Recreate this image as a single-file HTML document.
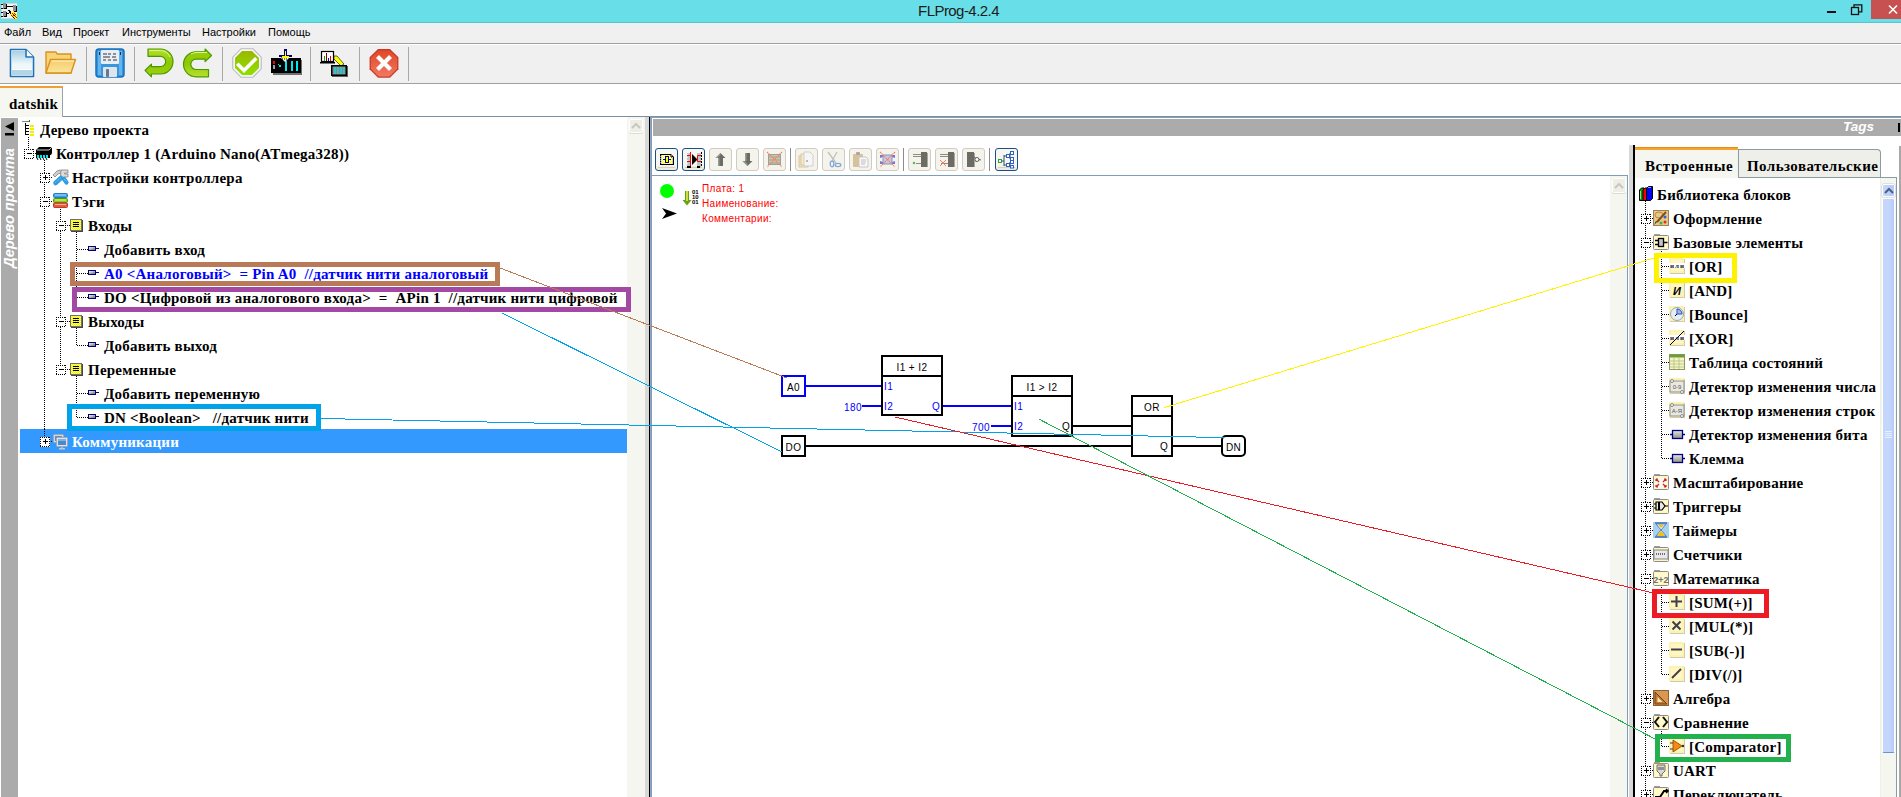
<!DOCTYPE html>
<html><head><meta charset="utf-8"><style>
*{margin:0;padding:0;box-sizing:border-box}
html,body{width:1901px;height:797px;overflow:hidden;background:#fff;position:relative;font-family:"Liberation Sans",sans-serif}
.a{position:absolute}
.mi{position:absolute;top:26px;font-size:11px;color:#000;line-height:13px}
.s{position:absolute;font-family:"Liberation Serif",serif;font-weight:bold;font-size:15px;letter-spacing:0.22px;line-height:24px;white-space:pre;color:#000}
.vd{position:absolute;width:1px;background-image:linear-gradient(#000 50%,transparent 50%);background-size:1px 2px}
.hd{position:absolute;height:1px;background-image:linear-gradient(90deg,#000 50%,transparent 50%);background-size:2px 1px}
.eb{position:absolute;width:9px;height:9px;background:#fff}
.eb i{position:absolute;background:#000}
.blk{position:absolute;border:2px solid #000;background:#fff}
.dg{position:absolute;font-size:10px;line-height:12px;white-space:pre;letter-spacing:0.4px}
svg{position:absolute;overflow:visible}
</style></head><body>
<div class="a" style="left:0;top:0;width:1901px;height:22px;background:#68dfe8"></div>
<div class="a" style="left:0;top:22px;width:1901px;height:1px;background:#55c6ce"></div>
<div class="a" style="left:0;top:2px;width:1901px;text-align:center;font-size:15px;letter-spacing:-0.55px;color:#1e1a1a;padding-left:16px;line-height:18px">FLProg-4.2.4</div>
<svg style="left:1px;top:3px" width="16" height="16" viewBox="0 0 16 16" shape-rendering="crispEdges">
<rect x="0" y="0" width="16" height="16" fill="#d8d4d4"/><rect x="1" y="1" width="15" height="14" fill="#f4f4f4"/>
<rect x="0" y="1" width="2" height="1" fill="#000"/><rect x="0" y="5" width="2" height="1" fill="#000"/><rect x="0" y="9" width="2" height="1" fill="#000"/><rect x="0" y="13" width="2" height="1" fill="#000"/>
<rect x="2" y="0" width="3" height="6" fill="#909090"/><rect x="5" y="1" width="1" height="5" fill="#000"/><rect x="3" y="5" width="3" height="1" fill="#000"/>
<rect x="2" y="8" width="3" height="6" fill="#909090"/><rect x="5" y="9" width="1" height="5" fill="#000"/><rect x="3" y="13" width="3" height="1" fill="#000"/>
<rect x="6" y="3" width="7" height="1" fill="#000"/><rect x="6" y="10" width="2" height="1" fill="#000"/>
<rect x="12" y="2" width="3" height="7" fill="#909090"/><rect x="15" y="3" width="1" height="6" fill="#000"/><rect x="13" y="8" width="3" height="1" fill="#000"/>
<rect x="7" y="7" width="2" height="1" fill="#000"/><rect x="8" y="8" width="2" height="2" fill="#000"/><rect x="9" y="10" width="1" height="1" fill="#000"/>
<path d="M9 11 L12 8 L16 12 L16 16 L13 16 Z" fill="#ff0"/>
<rect x="11" y="10" width="1" height="1" fill="#e00"/><rect x="12" y="11" width="1" height="1" fill="#e00"/><rect x="13" y="12" width="1" height="1" fill="#000"/><rect x="10" y="12" width="1" height="1" fill="#e00"/><rect x="11" y="13" width="1" height="1" fill="#e00"/><rect x="12" y="14" width="1" height="1" fill="#000"/><rect x="13" y="10" width="1" height="1" fill="#e00"/><rect x="14" y="11" width="1" height="1" fill="#e00"/><rect x="14" y="13" width="1" height="1" fill="#e00"/><rect x="15" y="14" width="1" height="1" fill="#e00"/><rect x="13" y="15" width="1" height="1" fill="#e00"/><rect x="12" y="12" width="1" height="1" fill="#e00"/>
</svg>
<div class="a" style="left:1827px;top:11px;width:9px;height:2px;background:#111"></div>
<svg style="left:1851px;top:4px" width="12" height="11" viewBox="0 0 12 11"><rect x="0.5" y="3.5" width="7" height="7" fill="none" stroke="#111" stroke-width="1.3"/><path d="M3 3.5 V0.8 H10.8 V7.8 H8" fill="none" stroke="#111" stroke-width="1.3"/></svg>
<div class="a" style="left:1871px;top:0;width:30px;height:19px;background:#c75050"></div>
<svg style="left:1888px;top:5px" width="10" height="9" viewBox="0 0 10 9"><path d="M1 0.5 L9 8.5 M9 0.5 L1 8.5" stroke="#fff" stroke-width="1.6"/></svg>
<div class="a" style="left:0;top:23px;width:1901px;height:20px;background:#f0f0f0"></div>
<div class="mi" style="left:4px">Файл</div>
<div class="mi" style="left:42px">Вид</div>
<div class="mi" style="left:73px">Проект</div>
<div class="mi" style="left:122px">Инструменты</div>
<div class="mi" style="left:202px">Настройки</div>
<div class="mi" style="left:268px">Помощь</div>
<div class="a" style="left:0;top:43px;width:1901px;height:1px;background:#a0a0a0"></div>
<div class="a" style="left:0;top:44px;width:1901px;height:1px;background:#fff"></div>
<div class="a" style="left:0;top:45px;width:1901px;height:38px;background:#f0f0f0"></div>
<div class="a" style="left:0;top:83px;width:1901px;height:1px;background:#a0a0a0"></div>
<div class="a" style="left:86px;top:47px;width:1px;height:34px;background:#a8a8a8"></div>
<div class="a" style="left:134px;top:47px;width:1px;height:34px;background:#a8a8a8"></div>
<div class="a" style="left:222px;top:47px;width:1px;height:34px;background:#a8a8a8"></div>
<div class="a" style="left:310px;top:47px;width:1px;height:34px;background:#a8a8a8"></div>
<div class="a" style="left:359px;top:47px;width:1px;height:34px;background:#a8a8a8"></div>
<div class="a" style="left:408px;top:47px;width:1px;height:34px;background:#a8a8a8"></div>
<div class="a" style="left:0;top:86px;width:63px;height:31px;background:#f7f7f2;border-top:2px solid #f0a030;border-right:1px solid #98a4ae"></div>
<div class="s" style="left:9px;top:92px">datshik</div>
<div class="a" style="left:63px;top:116px;width:1838px;height:1px;background:#7a8fa0"></div>
<div class="a" style="left:1px;top:118px;width:17px;height:679px;background:#ababab"></div>
<svg style="left:5px;top:122px" width="10" height="14" viewBox="0 0 10 14"><path d="M9 0 V9 L0 4.5 Z" fill="#000"/><rect x="0" y="11" width="9" height="2.5" fill="#000"/></svg>
<div class="a" style="left:-51px;top:200px;width:120px;height:16px;transform:rotate(-90deg);font-weight:bold;font-style:italic;font-size:14.5px;line-height:16px;color:#fff;text-align:center;white-space:pre">Дерево проекта</div>
<div class="a" style="left:627px;top:117px;width:18px;height:680px;background:#f6f6f1"></div>
<div class="a" style="left:629px;top:119px;width:14px;height:14px;background:#eeede6;border:1px solid #fff;border-radius:2px;box-shadow:0 1px 0 #dcdccc"></div>
<svg style="left:631px;top:122px" width="10" height="7" viewBox="0 0 10 7"><path d="M1 6 L5 2 L9 6" fill="none" stroke="#c8c8c0" stroke-width="2"/></svg>
<div class="a" style="left:645px;top:117px;width:4px;height:680px;background:#d8d8d8"></div>
<div class="a" style="left:649px;top:117px;width:1px;height:680px;background:#000"></div>
<svg style="left:9px;top:48px" width="26" height="30" viewBox="0 0 26 30">
<defs><linearGradient id="ndg" x1="0" y1="0" x2="0" y2="1"><stop offset="0" stop-color="#a8d0e2"/><stop offset="0.75" stop-color="#eef8fb"/></linearGradient></defs>
<path d="M1.5 1.5 H17 L24.5 9 V28.5 H1.5Z" fill="#fff" stroke="#1a72b8" stroke-width="1.6" stroke-linejoin="round"/>
<path d="M3 3 H16 V10 H23 V21 H3Z" fill="url(#ndg)"/><rect x="3" y="22" width="20" height="5" fill="#b2d6e6"/>
<path d="M17 1.5 V9 H24.5" fill="#fff" stroke="#1a72b8" stroke-width="1.6" stroke-linejoin="round"/>
</svg>
<svg style="left:45px;top:51px" width="32" height="25" viewBox="0 0 32 25">
<defs><linearGradient id="fdg" x1="0" y1="0" x2="0" y2="1"><stop offset="0" stop-color="#f4cc6a"/><stop offset="1" stop-color="#fce49a"/></linearGradient></defs>
<path d="M1 1 H11 L12 3 H26 V22 H1Z" fill="#f8d478" stroke="#d8921e" stroke-width="1.4" stroke-linejoin="round"/>
<path d="M1 22 L5.5 8.5 H30.5 L26 22Z" fill="url(#fdg)" stroke="#d8921e" stroke-width="1.4" stroke-linejoin="round"/>
<path d="M6.5 10 H29" stroke="#fff4c8" stroke-width="1"/>
</svg>
<svg style="left:95px;top:48px" width="30" height="30" viewBox="0 0 30 30">
<rect x="1" y="1" width="28" height="28" rx="3" fill="#3a96dc" stroke="#1670c0" stroke-width="1.5"/>
<rect x="3" y="3" width="3" height="24" fill="#66b4ec"/><rect x="24" y="3" width="3" height="24" fill="#66b4ec"/>
<rect x="6" y="2" width="18" height="14" rx="1" fill="#e8eef4"/>
<path d="M8 6 h4 M13 6 h3 M18 6 h3 M8 9 h7 M17 9 h4 M8 12 h3 M13 12 h3 M18 12 h4" stroke="#2a3440" stroke-width="1.2"/>
<rect x="8" y="19" width="14" height="10" rx="1" fill="#dce4ee"/><rect x="11" y="21" width="3" height="8" rx="1" fill="#6a7888"/>
<rect x="4" y="4" width="1" height="3" fill="#1a3050"/><rect x="25" y="4" width="1" height="3" fill="#1a3050"/>
</svg>
<svg style="left:144px;top:48px" width="30" height="30" viewBox="0 0 30 30"><defs><linearGradient id="urg" x1="0" y1="0" x2="0" y2="1"><stop offset="0" stop-color="#b8e030"/><stop offset="0.5" stop-color="#8cc800"/><stop offset="1" stop-color="#a0d010"/></linearGradient></defs><path d="M4 1 H16.5 A12.5 12.5 0 0 1 16.5 26 H7.4 V28.8 L1 22.35 L7.4 16.2 V18.7 H16.5 A5.2 5.2 0 0 0 16.5 8.3 H4 Z" fill="url(#urg)" stroke="#4a9800" stroke-width="1.2" stroke-linejoin="round"/><path d="M5 2.5 H16.5 A11 11 0 0 1 26 9" fill="none" stroke="#d8f880" stroke-width="1"/></svg>
<svg style="left:183px;top:48px" width="30" height="30" viewBox="0 0 30 30"><defs><linearGradient id="urg" x1="0" y1="0" x2="0" y2="1"><stop offset="0" stop-color="#b8e030"/><stop offset="0.5" stop-color="#8cc800"/><stop offset="1" stop-color="#a0d010"/></linearGradient></defs><g transform="rotate(180 14.75 14.9)"><path d="M4 1 H16.5 A12.5 12.5 0 0 1 16.5 26 H7.4 V28.8 L1 22.35 L7.4 16.2 V18.7 H16.5 A5.2 5.2 0 0 0 16.5 8.3 H4 Z" fill="url(#urg)" stroke="#4a9800" stroke-width="1.2" stroke-linejoin="round"/></g><path d="M8 6 A10 10 0 0 1 13 4.5 H24" fill="none" stroke="#d8f880" stroke-width="1"/></svg>
<svg style="left:231px;top:47px" width="32" height="32" viewBox="0 0 32 32">
<defs><linearGradient id="ckg" x1="0" y1="0" x2="0" y2="1"><stop offset="0" stop-color="#9ab800"/><stop offset="1" stop-color="#8ee000"/></linearGradient></defs>
<polygon points="30.78,22.12 22.12,30.78 9.88,30.78 1.22,22.12 1.22,9.88 9.88,1.22 22.12,1.22 30.78,9.88" fill="#b8b8c0"/><polygon points="29.67,21.66 21.66,29.67 10.34,29.67 2.33,21.66 2.33,10.34 10.34,2.33 21.66,2.33 29.67,10.34" fill="#f8f8fc"/><polygon points="28.01,20.97 20.97,28.01 11.03,28.01 3.99,20.97 3.99,11.03 11.03,3.99 20.97,3.99 28.01,11.03" fill="url(#ckg)"/>
<path d="M7.5 18 L13 23.5 L24 12.5" fill="none" stroke="#fff" stroke-width="3.6" stroke-linecap="square"/>
</svg>
<svg style="left:271px;top:49px" width="31" height="27" viewBox="0 0 31 27">
<rect x="2" y="11" width="29" height="15" fill="#707070"/>
<rect x="0" y="9" width="30" height="15" fill="#000"/>
<rect x="2" y="12" width="2" height="3" fill="#e00"/><rect x="2" y="16" width="2" height="4" fill="#a0a0a0"/>
<rect x="7" y="15" width="1" height="1" fill="#00e8f0"/><rect x="8" y="16" width="2" height="2" fill="#00e8f0"/>
<rect x="14" y="12" width="2" height="10" fill="#00e8f0"/><rect x="20" y="12" width="2" height="10" fill="#00e8f0"/><rect x="25" y="12" width="2" height="10" fill="#00e8f0"/>
<path d="M9 8 L14 13 L19 8 L14 3Z" fill="#fff"/><path d="M10 8 h1 M12 8 h1 M14 8 h1 M16 8 h1 M11 10 h1 M13 10 h1 M15 10 h1" stroke="#000" stroke-width="1"/>
<rect x="13" y="0" width="3" height="9" fill="#000080"/><rect x="8" y="6" width="13" height="2" fill="#000080"/><rect x="14" y="2" width="1" height="9" fill="#ff0"/><rect x="11" y="7" width="7" height="2" fill="#ff0"/>
</svg>
<svg style="left:320px;top:50px" width="29" height="28" viewBox="0 0 29 28">
<rect x="1.5" y="1.5" width="12" height="10" fill="#fff" stroke="#000" stroke-width="1.2"/><rect x="0" y="12" width="15" height="1.5" fill="#000"/>
<rect x="4" y="6" width="1" height="5" fill="#0a0"/><rect x="6" y="3" width="1" height="8" fill="#800"/><rect x="8" y="8" width="1" height="3" fill="#00f"/><rect x="10" y="6" width="1" height="5" fill="#e00"/>
<path d="M14 6 L17 6 L24 14 L21 16 L14 9Z" fill="#ffff00" stroke="#000" stroke-width="0.6"/>
<rect x="12" y="16" width="16" height="11" fill="#606060"/><rect x="11" y="15" width="16" height="11" fill="#000"/><rect x="12.5" y="16.5" width="13" height="8" fill="#888"/>
<path d="M15 17 V24 M18 17 V24 M21 17 V24 M24 17 V24" stroke="#00e8f0" stroke-width="1.2"/>
</svg>
<svg style="left:368px;top:47px" width="32" height="32" viewBox="0 0 32 32">
<defs><linearGradient id="xg" x1="0" y1="0" x2="0" y2="1"><stop offset="0" stop-color="#e04828"/><stop offset="1" stop-color="#f07860"/></linearGradient></defs>
<polygon points="30.41,22.27 21.97,30.71 10.03,30.71 1.59,22.27 1.59,10.33 10.03,1.89 21.97,1.89 30.41,10.33" fill="#c83a28"/><polygon points="29.12,21.73 21.43,29.42 10.57,29.42 2.88,21.73 2.88,10.87 10.57,3.18 21.43,3.18 29.12,10.87" fill="url(#xg)"/>
<path d="M9.5 9.5 L22.5 22.5 M22.5 9.5 L9.5 22.5" stroke="#fff" stroke-width="4.2"/>
</svg>
<div class="vd" style="left:28px;top:137px;height:12px"></div>
<div class="vd" style="left:44px;top:160px;height:278px"></div>
<div class="vd" style="left:60px;top:209px;height:161px"></div>
<div class="vd" style="left:76px;top:232px;height:66px"></div>
<div class="vd" style="left:76px;top:328px;height:18px"></div>
<div class="vd" style="left:76px;top:376px;height:42px"></div>
<svg style="left:22px;top:120px" width="14" height="17" viewBox="0 0 14 17">
<rect x="0" y="1" width="5" height="1" fill="#888"/><rect x="5" y="1" width="2" height="1" fill="#0c0"/><rect x="7" y="0" width="1" height="2" fill="#555"/>
<rect x="3" y="3" width="1" height="12" fill="#000"/>
<rect x="3" y="5" width="4" height="1" fill="#000"/><rect x="3" y="8" width="4" height="1" fill="#000"/><rect x="3" y="11" width="4" height="1" fill="#000"/><rect x="3" y="14" width="4" height="1" fill="#000"/>
<rect x="8" y="5" width="4" height="2" fill="#f0f000"/><rect x="8" y="8" width="4" height="2" fill="#f0f000"/><rect x="8" y="11" width="4" height="2" fill="#f0f000"/><rect x="8" y="14" width="4" height="2" fill="#f0f000"/>
</svg>
<div class="s" style="left:40px;top:118px;color:#000;">Дерево проекта</div>
<svg style="left:24px;top:149px" width="10" height="10" viewBox="0 0 10 10"><rect x="0" y="0" width="10" height="10" fill="#fff"/><path d="M0.5 0 V10 M9.5 0 V10 M0 0.5 H10 M0 9.5 H10" stroke="#000" stroke-width="1" stroke-dasharray="1 1"/><rect x="3" y="4" width="5" height="1" fill="#000"/></svg>
<div class="hd" style="left:33px;top:153px;width:3px"></div>
<svg style="left:36px;top:147px" width="17" height="14" viewBox="0 0 17 14">
<path d="M3 0 H16 V6 L15 8 H0 V3 Z" fill="#000"/><path d="M1 3 H13 L16 0" stroke="#fff" stroke-width="0.8" fill="none"/>
<rect x="0" y="8" width="14" height="3" fill="#000"/>
<rect x="1" y="8" width="2" height="3" fill="#00e8f0"/><rect x="4" y="8" width="2" height="3" fill="#00e8f0"/><rect x="7" y="8" width="2" height="3" fill="#00e8f0"/><rect x="10" y="8" width="2" height="3" fill="#00e8f0"/>
<path d="M1 11 L2 13 M4 11 L5 13 M7 11 L8 13 M10 11 L11 13" stroke="#000" stroke-width="1"/>
</svg>
<div class="s" style="left:56px;top:142px;color:#000;">Контроллер 1 (Arduino Nano(ATmega328))</div>
<svg style="left:40px;top:173px" width="10" height="10" viewBox="0 0 10 10"><rect x="0" y="0" width="10" height="10" fill="#fff"/><path d="M0.5 0 V10 M9.5 0 V10 M0 0.5 H10 M0 9.5 H10" stroke="#000" stroke-width="1" stroke-dasharray="1 1"/><rect x="3" y="4" width="5" height="1" fill="#000"/><rect x="5" y="2" width="1" height="5" fill="#000"/></svg>
<div class="hd" style="left:49px;top:177px;width:3px"></div>
<svg style="left:52px;top:168px" width="17" height="17" viewBox="0 0 17 17">
<path d="M1 7 L5 3 L8 2 L10 3 L9 5 L6 6 L3 9 Z" fill="#d0d0d0" stroke="#8c8c8c" stroke-width="0.9"/>
<path d="M9 2 H16 V5 H12.5 V6 H16 V9 H11.5 L10.5 10.5 L8.5 9 Z" fill="#dcdcdc" stroke="#8c8c8c" stroke-width="0.9"/>
<path d="M9 10 L3.5 15" stroke="#2e9ce0" stroke-width="4.6" stroke-linecap="round"/><path d="M8.5 10 L3.5 14.5" stroke="#b8e4ff" stroke-width="0.8" stroke-dasharray="1 1"/>
<path d="M12 11 L14.5 14.5" stroke="#2e9ce0" stroke-width="4.2" stroke-linecap="round"/><path d="M12 11 L15 14" stroke="#b8e4ff" stroke-width="0.8" stroke-dasharray="1 1"/>
</svg>
<div class="s" style="left:72px;top:166px;color:#000;">Настройки контроллера</div>
<svg style="left:40px;top:197px" width="10" height="10" viewBox="0 0 10 10"><rect x="0" y="0" width="10" height="10" fill="#fff"/><path d="M0.5 0 V10 M9.5 0 V10 M0 0.5 H10 M0 9.5 H10" stroke="#000" stroke-width="1" stroke-dasharray="1 1"/><rect x="3" y="4" width="5" height="1" fill="#000"/></svg>
<div class="hd" style="left:49px;top:201px;width:3px"></div>
<svg style="left:53px;top:193px" width="15" height="15" viewBox="0 0 15 15">
<rect x="0.5" y="0.5" width="14" height="4" rx="1" fill="#3aa0e8" stroke="#2a78c0"/><rect x="2" y="1.5" width="11" height="1" fill="#a8dcff"/>
<rect x="0.5" y="5.5" width="14" height="4" rx="1" fill="#8cc820" stroke="#4a9a10"/><rect x="2" y="6.5" width="11" height="1" fill="#e0ff80"/>
<rect x="0.5" y="10" width="14" height="4.5" rx="1" fill="#e85a40" stroke="#c03a28"/><rect x="2" y="11" width="11" height="1" fill="#ffb090"/>
</svg>
<div class="s" style="left:72px;top:190px;color:#000;">Тэги</div>
<svg style="left:56px;top:221px" width="10" height="10" viewBox="0 0 10 10"><rect x="0" y="0" width="10" height="10" fill="#fff"/><path d="M0.5 0 V10 M9.5 0 V10 M0 0.5 H10 M0 9.5 H10" stroke="#000" stroke-width="1" stroke-dasharray="1 1"/><rect x="3" y="4" width="5" height="1" fill="#000"/></svg>
<div class="hd" style="left:65px;top:225px;width:5px"></div>
<svg style="left:70px;top:219px" width="13" height="13" viewBox="0 0 13 13"><defs><pattern id="chk" width="2" height="2" patternUnits="userSpaceOnUse"><rect width="2" height="2" fill="#f0f000"/><rect width="1" height="1" fill="#ffff80"/><rect x="1" y="1" width="1" height="1" fill="#ffff80"/></pattern></defs><rect x="1" y="1" width="12" height="12" fill="#444"/><rect x="0.5" y="0.5" width="11" height="11" fill="url(#chk)" stroke="#707070"/><rect x="3" y="3" width="6" height="1" fill="#000"/><rect x="3" y="5" width="6" height="1" fill="#000"/><rect x="3" y="7" width="6" height="1" fill="#000"/></svg>
<div class="s" style="left:88px;top:214px;color:#000;">Входы</div>
<div class="hd" style="left:77px;top:249px;width:11px"></div>
<svg style="left:88px;top:246px" width="11" height="5" viewBox="0 0 11 5"><defs><linearGradient id="pg" x1="0" y1="0" x2="1" y2="1"><stop offset="0" stop-color="#f8f8f4"/><stop offset="1" stop-color="#70705c"/></linearGradient></defs><rect x="0" y="0" width="8" height="5" fill="#000080"/><rect x="1" y="1" width="6" height="3" fill="url(#pg)"/><rect x="8" y="2" width="3" height="1" fill="#000080"/></svg>
<div class="s" style="left:104px;top:238px;color:#000;">Добавить вход</div>
<div class="hd" style="left:77px;top:273px;width:11px"></div>
<svg style="left:88px;top:270px" width="11" height="5" viewBox="0 0 11 5"><defs><linearGradient id="pg" x1="0" y1="0" x2="1" y2="1"><stop offset="0" stop-color="#f8f8f4"/><stop offset="1" stop-color="#70705c"/></linearGradient></defs><rect x="0" y="0" width="8" height="5" fill="#000080"/><rect x="1" y="1" width="6" height="3" fill="url(#pg)"/><rect x="8" y="2" width="3" height="1" fill="#000080"/></svg>
<div class="s" style="left:104px;top:262px;color:#0000ff;">A0 &lt;Аналоговый&gt;  = Pin A0  //датчик нити аналоговый</div>
<div class="hd" style="left:77px;top:297px;width:11px"></div>
<svg style="left:88px;top:294px" width="11" height="5" viewBox="0 0 11 5"><defs><linearGradient id="pg" x1="0" y1="0" x2="1" y2="1"><stop offset="0" stop-color="#f8f8f4"/><stop offset="1" stop-color="#70705c"/></linearGradient></defs><rect x="0" y="0" width="8" height="5" fill="#000080"/><rect x="1" y="1" width="6" height="3" fill="url(#pg)"/><rect x="8" y="2" width="3" height="1" fill="#000080"/></svg>
<div class="s" style="left:104px;top:286px;color:#000;">DO &lt;Цифровой из аналогового входа&gt;  =  APin 1  //датчик нити цифровой</div>
<svg style="left:56px;top:317px" width="10" height="10" viewBox="0 0 10 10"><rect x="0" y="0" width="10" height="10" fill="#fff"/><path d="M0.5 0 V10 M9.5 0 V10 M0 0.5 H10 M0 9.5 H10" stroke="#000" stroke-width="1" stroke-dasharray="1 1"/><rect x="3" y="4" width="5" height="1" fill="#000"/></svg>
<div class="hd" style="left:65px;top:321px;width:5px"></div>
<svg style="left:70px;top:315px" width="13" height="13" viewBox="0 0 13 13"><defs><pattern id="chk" width="2" height="2" patternUnits="userSpaceOnUse"><rect width="2" height="2" fill="#f0f000"/><rect width="1" height="1" fill="#ffff80"/><rect x="1" y="1" width="1" height="1" fill="#ffff80"/></pattern></defs><rect x="1" y="1" width="12" height="12" fill="#444"/><rect x="0.5" y="0.5" width="11" height="11" fill="url(#chk)" stroke="#707070"/><rect x="3" y="3" width="6" height="1" fill="#000"/><rect x="3" y="5" width="6" height="1" fill="#000"/><rect x="3" y="7" width="6" height="1" fill="#000"/></svg>
<div class="s" style="left:88px;top:310px;color:#000;">Выходы</div>
<div class="hd" style="left:77px;top:345px;width:11px"></div>
<svg style="left:88px;top:342px" width="11" height="5" viewBox="0 0 11 5"><defs><linearGradient id="pg" x1="0" y1="0" x2="1" y2="1"><stop offset="0" stop-color="#f8f8f4"/><stop offset="1" stop-color="#70705c"/></linearGradient></defs><rect x="0" y="0" width="8" height="5" fill="#000080"/><rect x="1" y="1" width="6" height="3" fill="url(#pg)"/><rect x="8" y="2" width="3" height="1" fill="#000080"/></svg>
<div class="s" style="left:104px;top:334px;color:#000;">Добавить выход</div>
<svg style="left:56px;top:365px" width="10" height="10" viewBox="0 0 10 10"><rect x="0" y="0" width="10" height="10" fill="#fff"/><path d="M0.5 0 V10 M9.5 0 V10 M0 0.5 H10 M0 9.5 H10" stroke="#000" stroke-width="1" stroke-dasharray="1 1"/><rect x="3" y="4" width="5" height="1" fill="#000"/></svg>
<div class="hd" style="left:65px;top:369px;width:5px"></div>
<svg style="left:70px;top:363px" width="13" height="13" viewBox="0 0 13 13"><defs><pattern id="chk" width="2" height="2" patternUnits="userSpaceOnUse"><rect width="2" height="2" fill="#f0f000"/><rect width="1" height="1" fill="#ffff80"/><rect x="1" y="1" width="1" height="1" fill="#ffff80"/></pattern></defs><rect x="1" y="1" width="12" height="12" fill="#444"/><rect x="0.5" y="0.5" width="11" height="11" fill="url(#chk)" stroke="#707070"/><rect x="3" y="3" width="6" height="1" fill="#000"/><rect x="3" y="5" width="6" height="1" fill="#000"/><rect x="3" y="7" width="6" height="1" fill="#000"/></svg>
<div class="s" style="left:88px;top:358px;color:#000;">Переменные</div>
<div class="hd" style="left:77px;top:393px;width:11px"></div>
<svg style="left:88px;top:390px" width="11" height="5" viewBox="0 0 11 5"><defs><linearGradient id="pg" x1="0" y1="0" x2="1" y2="1"><stop offset="0" stop-color="#f8f8f4"/><stop offset="1" stop-color="#70705c"/></linearGradient></defs><rect x="0" y="0" width="8" height="5" fill="#000080"/><rect x="1" y="1" width="6" height="3" fill="url(#pg)"/><rect x="8" y="2" width="3" height="1" fill="#000080"/></svg>
<div class="s" style="left:104px;top:382px;color:#000;">Добавить переменную</div>
<div class="hd" style="left:77px;top:417px;width:11px"></div>
<svg style="left:88px;top:414px" width="11" height="5" viewBox="0 0 11 5"><defs><linearGradient id="pg" x1="0" y1="0" x2="1" y2="1"><stop offset="0" stop-color="#f8f8f4"/><stop offset="1" stop-color="#70705c"/></linearGradient></defs><rect x="0" y="0" width="8" height="5" fill="#000080"/><rect x="1" y="1" width="6" height="3" fill="url(#pg)"/><rect x="8" y="2" width="3" height="1" fill="#000080"/></svg>
<div class="s" style="left:104px;top:406px;color:#000;">DN &lt;Boolean&gt;   //датчик нити</div>
<div class="a" style="left:20px;top:429px;width:607px;height:24px;background:#3399ff"></div>
<div class="vd" style="left:44px;top:429px;height:8px"></div>
<svg style="left:40px;top:437px" width="10" height="10" viewBox="0 0 10 10"><rect x="0" y="0" width="10" height="10" fill="#fff"/><path d="M0.5 0 V10 M9.5 0 V10 M0 0.5 H10 M0 9.5 H10" stroke="#000" stroke-width="1" stroke-dasharray="1 1"/><rect x="3" y="4" width="5" height="1" fill="#000"/><rect x="5" y="2" width="1" height="5" fill="#000"/></svg>
<div class="hd" style="left:49px;top:441px;width:3px"></div>
<svg style="left:52px;top:433px" width="17" height="17" viewBox="0 0 17 17">
<rect x="1.5" y="1.5" width="10" height="8" rx="1" fill="#d0d8e0" stroke="#a0a8b0"/><rect x="3" y="3" width="7" height="5" fill="#5a90c8"/>
<rect x="4.5" y="4.5" width="11" height="9" rx="1" fill="#e0e4e8" stroke="#a0a8b0"/><rect x="6" y="6" width="8" height="6" fill="#4a88d0"/><rect x="6" y="6" width="8" height="2" fill="#80b0e0"/>
<rect x="9" y="13.5" width="2" height="2" fill="#b0b0b0"/><rect x="7" y="15" width="6" height="1.5" fill="#c8c8c8"/>
</svg>
<div class="s" style="left:72px;top:430px;color:#fff;">Коммуникации</div>
<div class="a" style="left:650px;top:117px;width:1px;height:680px;background:#8fa8c0"></div>
<div class="a" style="left:651px;top:117px;width:1px;height:680px;background:#7f9db9"></div>
<div class="a" style="left:651px;top:117px;width:1250px;height:1px;background:#8aa0b4"></div>
<div class="a" style="left:653px;top:119px;width:1248px;height:17px;background:#ababab"></div>
<div class="a" style="left:1843px;top:118px;font-weight:bold;font-style:italic;font-size:13.5px;line-height:18px;color:#fff">Tags</div>
<div class="a" style="left:1898px;top:123px;width:2px;height:9px;background:#000"></div>
<div class="a" style="left:655px;top:148px;width:23px;height:23px;border-radius:3px;border:1.5px solid #1a4f8a;background:linear-gradient(#f7f7f2 70%,#ede9dd);"></div>
<div class="a" style="left:658px;top:167px;width:17px;height:1px;background:#d8cfbf"></div>
<svg style="left:658px;top:151px" width="17" height="17" viewBox="0 0 17 17"><defs><pattern id="yck" width="2" height="2" patternUnits="userSpaceOnUse"><rect width="2" height="2" fill="#ffff00"/><rect width="1" height="1" fill="#fff"/><rect x="1" y="1" width="1" height="1" fill="#fff"/></pattern></defs><path d="M2 3 H13 L16 6 V14 H2Z" fill="#000"/><rect x="3" y="4" width="1" height="9" fill="#c8c8c8"/><path d="M3 5 v1 M3 7 v1 M3 9 v1 M3 11 v1" stroke="#fff"/><rect x="4" y="4" width="10" height="9" fill="url(#yck)"/><path d="M13 4 V6 H15" fill="none" stroke="#000"/><rect x="14" y="6" width="1" height="7" fill="#c8c8c8"/><rect x="5" y="8" width="8" height="1" fill="#0000a0"/><rect x="7.5" y="5.5" width="3" height="6" fill="#ffff00" stroke="#0000a0"/></svg>
<div class="a" style="left:682px;top:148px;width:23px;height:23px;border-radius:3px;border:1.5px solid #1a4f8a;background:linear-gradient(#f7f7f2 70%,#ede9dd);"></div>
<div class="a" style="left:685px;top:167px;width:17px;height:1px;background:#d8cfbf"></div>
<svg style="left:685px;top:151px" width="17" height="17" viewBox="0 0 17 17"><rect x="2" y="2" width="3" height="14" fill="#b8c8c8"/><path d="M2.5 3 v1 M2.5 6 v1 M2.5 9 v1 M2.5 12 v1" stroke="#e8f0f0"/><rect x="5" y="1" width="1" height="15" fill="#f00"/><rect x="2" y="4" width="3" height="1" fill="#f00"/><rect x="2" y="10" width="3" height="1" fill="#f00"/><rect x="2" y="15" width="4" height="2" fill="#000"/><path d="M7 3 L12.5 8.5 L7 14Z" fill="#000"/><rect x="12" y="2" width="4" height="14" fill="#b8c8c8"/><path d="M12.5 4.5 H16 M12.5 4.5 V10.5 H16" fill="none" stroke="#f00"/><path d="M16.5 1 v2 M16.5 4 v2 M16.5 7 v2 M16.5 10 v2 M16.5 13 v2" stroke="#000"/><rect x="12" y="15" width="3" height="2" fill="#000"/></svg>
<div class="a" style="left:709px;top:148px;width:23px;height:23px;border-radius:3px;border:1px solid #cfcdbf;background:#f4f3ec;"></div>
<svg style="left:712px;top:151px" width="17" height="17" viewBox="0 0 17 17"><path d="M8.5 2 L13.5 7 H11 V15 H6 V7 H3.5Z" fill="#6c6c64"/><path d="M8.5 2 L3.5 7 H6 V15 H7.5 V7 H5.5 L8.5 4Z" fill="#9c9c94"/></svg>
<div class="a" style="left:736px;top:148px;width:23px;height:23px;border-radius:3px;border:1px solid #cfcdbf;background:#f4f3ec;"></div>
<svg style="left:739px;top:151px" width="17" height="17" viewBox="0 0 17 17"><path d="M8.5 15 L13.5 10 H11 V2 H6 V10 H3.5Z" fill="#6c6c64"/><path d="M8.5 15 L3.5 10 H6 V2 H7.5 V10 H5.5 L8.5 13Z" fill="#9c9c94"/></svg>
<div class="a" style="left:763px;top:148px;width:23px;height:23px;border-radius:3px;border:1px solid #cfcdbf;background:#f4f3ec;"></div>
<svg style="left:766px;top:151px" width="17" height="17" viewBox="0 0 17 17"><rect x="2" y="3" width="13" height="11" fill="#a0a098"/><rect x="3" y="4" width="11" height="9" fill="#d0c8a0"/><path d="M3 6 H14 M3 9 H14 M3 12 H14" stroke="#9898c8"/><path d="M4 5 L13 12 M5 12 L12 5" stroke="#e0c040" stroke-width="0.8"/><path d="M1 1 L16 16 M16 1 L1 16" stroke="#f08060" stroke-width="1.1" stroke-dasharray="1.4 0.7"/></svg>
<div class="a" style="left:795px;top:148px;width:23px;height:23px;border-radius:3px;border:1px solid #cfcdbf;background:#f4f3ec;"></div>
<svg style="left:798px;top:151px" width="17" height="17" viewBox="0 0 17 17"><rect x="1" y="5" width="9" height="11" fill="#f0e4c0" stroke="#d8c898"/><rect x="3" y="3" width="9" height="11" fill="#f4ead0" stroke="#d8c898"/><path d="M6 1 H12 L15 4 V15 H6Z" fill="#f6f6f6" stroke="#d0d0d0"/><rect x="8" y="9" width="2" height="2" fill="#c8b890"/></svg>
<div class="a" style="left:822px;top:148px;width:23px;height:23px;border-radius:3px;border:1px solid #cfcdbf;background:#f4f3ec;"></div>
<svg style="left:825px;top:151px" width="17" height="17" viewBox="0 0 17 17"><path d="M3 1 L11 12 M12 1 L7 10" stroke="#c0c0c0" stroke-width="1.3"/><ellipse cx="7" cy="13" rx="1.8" ry="2.8" fill="none" stroke="#80a8d8" stroke-width="1.3"/><ellipse cx="13" cy="14" rx="2.8" ry="1.6" fill="none" stroke="#80a8d8" stroke-width="1.3"/></svg>
<div class="a" style="left:849px;top:148px;width:23px;height:23px;border-radius:3px;border:1px solid #cfcdbf;background:#f4f3ec;"></div>
<svg style="left:852px;top:151px" width="17" height="17" viewBox="0 0 17 17"><rect x="1" y="3" width="10" height="13" rx="1" fill="#d8c098"/><rect x="4" y="1" width="4" height="3" rx="1" fill="#a8a8a8"/><path d="M7 6 H14 L16 8 V16 H7Z" fill="#f8f8f8" stroke="#c8c8c8"/><path d="M9 9 h5 M9 11 h5 M9 13 h4" stroke="#c0c0c0"/></svg>
<div class="a" style="left:876px;top:148px;width:23px;height:23px;border-radius:3px;border:1px solid #cfcdbf;background:#f4f3ec;"></div>
<svg style="left:879px;top:151px" width="17" height="17" viewBox="0 0 17 17"><path d="M1 4 H4 V6 L1 7 V10 L4 11 V13 H1Z" fill="#7878d0"/><path d="M16 4 H13 V6 L16 7 V10 L13 11 V13 H16Z" fill="#7878d0"/><rect x="4" y="4" width="9" height="9" fill="#c8c8e0" stroke="#9090c0"/><path d="M1 1 L16 16 M16 1 L1 16" stroke="#f08060" stroke-width="1.1" stroke-dasharray="1.4 0.7"/></svg>
<div class="a" style="left:908px;top:148px;width:23px;height:23px;border-radius:3px;border:1px solid #cfcdbf;background:#f4f3ec;"></div>
<svg style="left:911px;top:151px" width="17" height="17" viewBox="0 0 17 17"><rect x="10" y="1" width="6" height="15" fill="#6c6c64"/><rect x="16" y="2" width="1" height="14" fill="#a8a8a0"/><path d="M2 3.5 H10 M2 5.5 H10" stroke="#8c8c84"/><path d="M5 12.5 H10" stroke="#8c8c84"/><path d="M3 10.5 l1.5 1.5 l-1.5 1.5 l-1.5 -1.5z" fill="#50b050"/></svg>
<div class="a" style="left:935px;top:148px;width:23px;height:23px;border-radius:3px;border:1px solid #cfcdbf;background:#f4f3ec;"></div>
<svg style="left:938px;top:151px" width="17" height="17" viewBox="0 0 17 17"><rect x="10" y="1" width="6" height="15" fill="#6c6c64"/><rect x="16" y="2" width="1" height="14" fill="#a8a8a0"/><path d="M2 3.5 H10 M2 5.5 H10 M3 12.5 H10" stroke="#8c8c84"/><path d="M2 9 L8 15 M8 9 L2 15" stroke="#f08060"/></svg>
<div class="a" style="left:962px;top:148px;width:23px;height:23px;border-radius:3px;border:1px solid #cfcdbf;background:#f4f3ec;"></div>
<svg style="left:965px;top:151px" width="17" height="17" viewBox="0 0 17 17"><rect x="2" y="1" width="7" height="15" fill="#6c6c64"/><rect x="9" y="2" width="1" height="14" fill="#a8a8a0"/><path d="M9 6 L12 8 L16 9 M12 8 L11 11" stroke="#606058" fill="none"/><circle cx="12" cy="8.5" r="2" fill="#fff" stroke="#606058"/></svg>
<div class="a" style="left:995px;top:148px;width:23px;height:23px;border-radius:3px;border:1.5px solid #1a4f8a;background:linear-gradient(#f7f7f2 70%,#ede9dd);"></div>
<div class="a" style="left:998px;top:167px;width:17px;height:1px;background:#d8cfbf"></div>
<svg style="left:998px;top:151px" width="17" height="17" viewBox="0 0 17 17"><rect x="0.5" y="8.5" width="3" height="3" fill="#fff" stroke="#30a030"/><path d="M3.5 10 H6 M6 4 V15 M6 5 H9 M6 14 H9 M11 5 H12 V2 M12 5 V8 M11 14 H12 V11 M12 14 V16" stroke="#30507a" fill="none"/><rect x="8.5" y="3.5" width="3" height="3" fill="#fff" stroke="#3060c0"/><rect x="8.5" y="12.5" width="3" height="3" fill="#fff" stroke="#3060c0"/><rect x="12.5" y="0.5" width="3" height="3" fill="#fff" stroke="#3060c0"/><rect x="12.5" y="6.5" width="3" height="3" fill="#fff" stroke="#3060c0"/><rect x="12.5" y="9.5" width="3" height="3" fill="#fff" stroke="#3060c0"/><rect x="12.5" y="14.5" width="3" height="2.5" fill="#fff" stroke="#3060c0"/></svg>
<div class="a" style="left:790px;top:148px;width:1px;height:23px;background:#8c8c8c"></div>
<div class="a" style="left:903px;top:148px;width:1px;height:23px;background:#8c8c8c"></div>
<div class="a" style="left:989px;top:148px;width:1px;height:23px;background:#8c8c8c"></div>
<div class="a" style="left:651px;top:175px;width:977px;height:1px;background:#7f9db9"></div>
<div class="a" style="left:1627px;top:175px;width:1px;height:622px;background:#7f9db9"></div>
<div class="a" style="left:1610px;top:176px;width:17px;height:621px;background:#f6f6f1"></div>
<div class="a" style="left:1612px;top:178px;width:14px;height:15px;background:#eeede6;border:1px solid #fff;border-radius:2px;box-shadow:0 1px 0 #dcdccc"></div>
<svg style="left:1614px;top:182px" width="10" height="7" viewBox="0 0 10 7"><path d="M1 6 L5 2 L9 6" fill="none" stroke="#c8c8c0" stroke-width="2"/></svg>
<div class="a" style="left:660px;top:184px;width:14px;height:14px;border-radius:50%;background:#00ff00"></div>
<svg style="left:662px;top:208px" width="15" height="11" viewBox="0 0 15 11"><path d="M0 0 L15 5.5 L0 11 L4 5.5Z" fill="#000"/></svg>
<svg style="left:682px;top:191px" width="10" height="15" viewBox="0 0 10 15"><path d="M3 0 H7 V9 H9.5 L5 14.5 L0.5 9 H3Z" fill="#6aa010"/><rect x="4" y="0" width="2" height="10" fill="#c8e040"/></svg>
<div class="a" style="left:692px;top:190px;font-size:6px;line-height:5px;font-weight:bold;color:#000;white-space:pre">01
10
01</div>
<div class="a dg" style="left:702px;top:183px;color:#f00;letter-spacing:0.35px">Плата: 1</div>
<div class="a dg" style="left:702px;top:198px;color:#f00;letter-spacing:0.35px">Наименование:</div>
<div class="a dg" style="left:702px;top:213px;color:#f00;letter-spacing:0.35px">Комментарии:</div>
<div class="a" style="left:781px;top:375px;width:25px;height:22px;border:2px solid #0000ff;background:#fff"></div>
<div class="a dg" style="left:781px;top:382px;width:25px;text-align:center;color:#000">A0</div>
<div class="a" style="left:806px;top:385px;width:75px;height:2px;background:#0000ff"></div>
<div class="blk" style="left:881px;top:355px;width:62px;height:61px"></div>
<div class="a" style="left:881px;top:375px;width:62px;height:2px;background:#000"></div>
<div class="a dg" style="left:881px;top:362px;width:62px;text-align:center;color:#000">I1 + I2</div>
<div class="a dg" style="left:884px;top:381px;color:#0000ff">I1</div>
<div class="a dg" style="left:884px;top:401px;color:#0000ff">I2</div>
<div class="a dg" style="left:932px;top:401px;color:#0000ff">Q</div>
<div class="a dg" style="left:844px;top:402px;color:#0000ff">180</div>
<div class="a" style="left:862px;top:405px;width:19px;height:2px;background:#0000ff"></div>
<div class="a" style="left:943px;top:405px;width:68px;height:2px;background:#0000ff"></div>
<div class="blk" style="left:1011px;top:375px;width:62px;height:62px"></div>
<div class="a" style="left:1011px;top:395px;width:62px;height:2px;background:#000"></div>
<div class="a dg" style="left:1011px;top:382px;width:62px;text-align:center;color:#000">I1 &gt; I2</div>
<div class="a dg" style="left:1014px;top:401px;color:#0000ff">I1</div>
<div class="a dg" style="left:1014px;top:421px;color:#0000ff">I2</div>
<div class="a dg" style="left:1062px;top:421px;color:#000">Q</div>
<div class="a dg" style="left:972px;top:422px;color:#0000ff">700</div>
<div class="a" style="left:991px;top:425px;width:20px;height:2px;background:#0000ff"></div>
<div class="a" style="left:1073px;top:425px;width:58px;height:2px;background:#000"></div>
<div class="blk" style="left:781px;top:435px;width:25px;height:22px"></div>
<div class="a dg" style="left:781px;top:442px;width:25px;text-align:center;color:#000">DO</div>
<div class="a" style="left:806px;top:445px;width:325px;height:2px;background:#000"></div>
<div class="blk" style="left:1131px;top:395px;width:42px;height:62px"></div>
<div class="a" style="left:1131px;top:415px;width:42px;height:2px;background:#000"></div>
<div class="a dg" style="left:1131px;top:402px;width:42px;text-align:center;color:#000">OR</div>
<div class="a dg" style="left:1160px;top:441px;color:#000">Q</div>
<div class="a" style="left:1173px;top:445px;width:49px;height:2px;background:#000"></div>
<div class="a" style="left:1221px;top:435px;width:25px;height:22px;border:2px solid #000;border-radius:5px;background:#fff"></div>
<div class="a dg" style="left:1221px;top:442px;width:25px;text-align:center;color:#000">DN</div>
<div class="a" style="left:1629px;top:145px;width:4px;height:652px;background:#d8d8d8"></div>
<div class="a" style="left:1633px;top:145px;width:1.5px;height:652px;background:#000"></div>
<div class="a" style="left:1635px;top:147px;width:103px;height:31px;background:#f6f6f1;border-top:3px solid #f5a52a;border-radius:2px 2px 0 0"></div>
<div class="a" style="left:1635px;top:147px;width:103px;height:1px;background:#e68a20"></div>
<div class="s" style="left:1645px;top:154px;letter-spacing:0.6px">Встроенные</div>
<div class="a" style="left:1738px;top:149px;width:143px;height:29px;background:#efefea;border:1px solid #8c9aa2;border-bottom:none;border-radius:0 4px 0 0"></div>
<div class="s" style="left:1747px;top:154px;letter-spacing:0.42px">Пользовательские</div>
<div class="a" style="left:1738px;top:177px;width:159px;height:1px;background:#8c9aa2"></div>
<div class="a" style="left:1896px;top:177px;width:1px;height:620px;background:#8c9aa2"></div>
<div class="a" style="left:1899px;top:146px;width:2px;height:651px;background:#a8a8a8"></div>
<div class="a" style="left:1880px;top:178px;width:16px;height:619px;background:#f6f6f1;border-left:1px solid #f0efe4"></div>
<div class="a" style="left:1882px;top:184px;width:13px;height:13px;border-radius:2px;background:linear-gradient(90deg,#c8d8fb,#b4c8f6);border:1px solid #fff;box-shadow:0 0 0 0.5px #c0cce8"></div>
<svg style="left:1884px;top:187px" width="10" height="7" viewBox="0 0 10 7"><path d="M1 6 L5 2 L9 6" fill="none" stroke="#4d6185" stroke-width="2"/></svg>
<div class="a" style="left:1882px;top:198px;width:13px;height:555px;border-radius:2px;background:linear-gradient(90deg,#c4d6fc 0%,#c4d6fc 60%,#b4c9f8 100%);border:1px solid #fff;border-bottom:1.5px solid #6f8fd0"></div>
<div class="a" style="left:1885px;top:431px;width:7px;height:1px;background:#e8f0ff"></div>
<div class="a" style="left:1885px;top:433px;width:7px;height:1px;background:#e8f0ff"></div>
<div class="a" style="left:1885px;top:435px;width:7px;height:1px;background:#e8f0ff"></div>
<div class="a" style="left:1885px;top:437px;width:7px;height:1px;background:#e8f0ff"></div>
<div class="vd" style="left:1645px;top:201px;height:596px"></div>
<div class="vd" style="left:1661px;top:251px;height:208px"></div>
<div class="vd" style="left:1661px;top:587px;height:88px"></div>
<div class="vd" style="left:1661px;top:731px;height:16px"></div>
<svg style="left:1639px;top:186px" width="14" height="15" viewBox="0 0 14 15">
<path d="M0.5 14.5 V4 L2.5 2 H5 V14.5Z" fill="#00a000" stroke="#000"/><path d="M1.5 13 V5" stroke="#fff" stroke-width="0.6"/>
<path d="M4 14.5 V4 L6 2 H8.5 V14.5Z" fill="#ff0000" stroke="#000"/>
<path d="M7.5 14.5 V2.5 L9.5 0.5 H13.5 V12.5 L11.5 14.5Z" fill="#0000ff" stroke="#000"/><path d="M9 1.5 H12" stroke="#fff" stroke-width="0.6"/>
</svg>
<div class="s" style="left:1657px;top:183px">Библиотека блоков</div>
<svg style="left:1641px;top:214px" width="10" height="10" viewBox="0 0 10 10"><rect x="0" y="0" width="10" height="10" fill="#fff"/><path d="M0.5 0 V10 M9.5 0 V10 M0 0.5 H10 M0 9.5 H10" stroke="#000" stroke-width="1" stroke-dasharray="1 1"/><rect x="3" y="4" width="5" height="1" fill="#000"/><rect x="5" y="2" width="1" height="5" fill="#000"/></svg>
<div class="hd" style="left:1650px;top:218px;width:3px"></div>
<svg style="left:1653px;top:210px" width="17" height="17" viewBox="0 0 17 17"><rect x="1" y="0" width="6" height="2" fill="#a0a0a0"/><rect x="0.5" y="1.5" width="15" height="14" rx="1" fill="#fff6c0" stroke="#8c8c8c"/><rect x="2" y="3" width="12" height="11" fill="#fff9cc"/><rect x="0.5" y="0.5" width="15" height="15" fill="#e8c888" stroke="#a08058"/><ellipse cx="6" cy="5" rx="4" ry="3" fill="none" stroke="#c08838"/><path d="M13 2 L4 12" stroke="#805020" stroke-width="2"/><path d="M4 12 L1 15 L3 11Z" fill="#222"/><circle cx="12" cy="7" r="1.5" fill="#3060e0"/><circle cx="8" cy="13" r="1.5" fill="#40b040"/><circle cx="12" cy="12" r="1.5" fill="#e03020"/></svg>
<div class="s" style="left:1673px;top:207px">Оформление</div>
<svg style="left:1641px;top:238px" width="10" height="10" viewBox="0 0 10 10"><rect x="0" y="0" width="10" height="10" fill="#fff"/><path d="M0.5 0 V10 M9.5 0 V10 M0 0.5 H10 M0 9.5 H10" stroke="#000" stroke-width="1" stroke-dasharray="1 1"/><rect x="3" y="4" width="5" height="1" fill="#000"/></svg>
<div class="hd" style="left:1650px;top:242px;width:3px"></div>
<svg style="left:1653px;top:234px" width="17" height="17" viewBox="0 0 17 17"><rect x="1" y="0" width="6" height="2" fill="#a0a0a0"/><rect x="0.5" y="1.5" width="15" height="14" rx="1" fill="#fff6c0" stroke="#8c8c8c"/><rect x="2" y="3" width="12" height="11" fill="#fff9cc"/><rect x="5.5" y="4.5" width="5" height="8" fill="#c4c4c4" stroke="#000" stroke-width="1.3"/><path d="M2 6.5 H5 M2 10.5 H5 M11 8.5 H14.5" stroke="#000" stroke-width="1.3"/></svg>
<div class="s" style="left:1673px;top:231px">Базовые элементы</div>
<svg style="left:1641px;top:478px" width="10" height="10" viewBox="0 0 10 10"><rect x="0" y="0" width="10" height="10" fill="#fff"/><path d="M0.5 0 V10 M9.5 0 V10 M0 0.5 H10 M0 9.5 H10" stroke="#000" stroke-width="1" stroke-dasharray="1 1"/><rect x="3" y="4" width="5" height="1" fill="#000"/><rect x="5" y="2" width="1" height="5" fill="#000"/></svg>
<div class="hd" style="left:1650px;top:482px;width:3px"></div>
<svg style="left:1653px;top:474px" width="17" height="17" viewBox="0 0 17 17"><rect x="1" y="0" width="6" height="2" fill="#a0a0a0"/><rect x="0.5" y="1.5" width="15" height="14" rx="1" fill="#fff6c0" stroke="#8c8c8c"/><rect x="2" y="3" width="12" height="11" fill="#fff9cc"/><rect x="2" y="4" width="12" height="10" fill="#f8f8f0"/><path d="M3 5 L6 8 M3 5 V7 M3 5 H5 M13 5 L10 8 M13 5 V7 M13 5 H11 M3 13 L6 10 M3 13 V11 M3 13 H5 M13 13 L10 10 M13 13 V11 M13 13 H11" stroke="#d02020" stroke-width="1.2"/></svg>
<div class="s" style="left:1673px;top:471px">Масштабирование</div>
<svg style="left:1641px;top:502px" width="10" height="10" viewBox="0 0 10 10"><rect x="0" y="0" width="10" height="10" fill="#fff"/><path d="M0.5 0 V10 M9.5 0 V10 M0 0.5 H10 M0 9.5 H10" stroke="#000" stroke-width="1" stroke-dasharray="1 1"/><rect x="3" y="4" width="5" height="1" fill="#000"/><rect x="5" y="2" width="1" height="5" fill="#000"/></svg>
<div class="hd" style="left:1650px;top:506px;width:3px"></div>
<svg style="left:1653px;top:498px" width="17" height="17" viewBox="0 0 17 17"><rect x="1" y="0" width="6" height="2" fill="#a0a0a0"/><rect x="0.5" y="1.5" width="15" height="14" rx="1" fill="#fff6c0" stroke="#8c8c8c"/><rect x="2" y="3" width="12" height="11" fill="#fff9cc"/><path d="M3 4 H9 L12 8 L9 12 H3Z" fill="#e8e8e8" stroke="#000" stroke-width="1.2"/><path d="M1 6 H3 M1 10 H3 M12 8 H15" stroke="#000" stroke-width="1.2"/><rect x="5" y="4" width="2" height="8" fill="#000"/></svg>
<div class="s" style="left:1673px;top:495px">Триггеры</div>
<svg style="left:1641px;top:526px" width="10" height="10" viewBox="0 0 10 10"><rect x="0" y="0" width="10" height="10" fill="#fff"/><path d="M0.5 0 V10 M9.5 0 V10 M0 0.5 H10 M0 9.5 H10" stroke="#000" stroke-width="1" stroke-dasharray="1 1"/><rect x="3" y="4" width="5" height="1" fill="#000"/><rect x="5" y="2" width="1" height="5" fill="#000"/></svg>
<div class="hd" style="left:1650px;top:530px;width:3px"></div>
<svg style="left:1653px;top:522px" width="17" height="17" viewBox="0 0 17 17"><rect x="1" y="0" width="6" height="2" fill="#a0a0a0"/><rect x="0.5" y="1.5" width="15" height="14" rx="1" fill="#fff6c0" stroke="#8c8c8c"/><rect x="2" y="3" width="12" height="11" fill="#fff9cc"/><rect x="0" y="0" width="16" height="16" fill="#a8d0f0"/><path d="M2 1 H14 M2 15 H14" stroke="#4070b0" stroke-width="1.5"/><path d="M3 2 H13 L8 8 L13 14 H3 L8 8Z" fill="#f8f8f8" stroke="#5080c0"/><path d="M8 9 L12 14 H4Z" fill="#f8c000"/><path d="M5 3 H11 L8 6Z" fill="#f8c000"/></svg>
<div class="s" style="left:1673px;top:519px">Таймеры</div>
<svg style="left:1641px;top:550px" width="10" height="10" viewBox="0 0 10 10"><rect x="0" y="0" width="10" height="10" fill="#fff"/><path d="M0.5 0 V10 M9.5 0 V10 M0 0.5 H10 M0 9.5 H10" stroke="#000" stroke-width="1" stroke-dasharray="1 1"/><rect x="3" y="4" width="5" height="1" fill="#000"/><rect x="5" y="2" width="1" height="5" fill="#000"/></svg>
<div class="hd" style="left:1650px;top:554px;width:3px"></div>
<svg style="left:1653px;top:546px" width="17" height="17" viewBox="0 0 17 17"><rect x="1" y="0" width="6" height="2" fill="#a0a0a0"/><rect x="0.5" y="1.5" width="15" height="14" rx="1" fill="#fff6c0" stroke="#8c8c8c"/><rect x="2" y="3" width="12" height="11" fill="#fff9cc"/><rect x="1" y="4" width="14" height="9" fill="#e8e8e8" stroke="#888"/><path d="M3 8 h1 M5 8 h1 M7 8 h1 M9 8 h1 M11 8 h1" stroke="#444" stroke-width="1.5"/></svg>
<div class="s" style="left:1673px;top:543px">Счетчики</div>
<svg style="left:1641px;top:574px" width="10" height="10" viewBox="0 0 10 10"><rect x="0" y="0" width="10" height="10" fill="#fff"/><path d="M0.5 0 V10 M9.5 0 V10 M0 0.5 H10 M0 9.5 H10" stroke="#000" stroke-width="1" stroke-dasharray="1 1"/><rect x="3" y="4" width="5" height="1" fill="#000"/></svg>
<div class="hd" style="left:1650px;top:578px;width:3px"></div>
<svg style="left:1653px;top:570px" width="17" height="17" viewBox="0 0 17 17"><rect x="1" y="0" width="6" height="2" fill="#a0a0a0"/><rect x="0.5" y="1.5" width="15" height="14" rx="1" fill="#fff6c0" stroke="#8c8c8c"/><rect x="2" y="3" width="12" height="11" fill="#fff9cc"/><text x="8" y="12.5" font-size="9" font-weight="bold" text-anchor="middle" fill="#707070" font-family="Liberation Sans">2+2</text></svg>
<div class="s" style="left:1673px;top:567px">Математика</div>
<svg style="left:1641px;top:694px" width="10" height="10" viewBox="0 0 10 10"><rect x="0" y="0" width="10" height="10" fill="#fff"/><path d="M0.5 0 V10 M9.5 0 V10 M0 0.5 H10 M0 9.5 H10" stroke="#000" stroke-width="1" stroke-dasharray="1 1"/><rect x="3" y="4" width="5" height="1" fill="#000"/><rect x="5" y="2" width="1" height="5" fill="#000"/></svg>
<div class="hd" style="left:1650px;top:698px;width:3px"></div>
<svg style="left:1653px;top:690px" width="17" height="17" viewBox="0 0 17 17"><rect x="1" y="0" width="6" height="2" fill="#a0a0a0"/><rect x="0.5" y="1.5" width="15" height="14" rx="1" fill="#fff6c0" stroke="#8c8c8c"/><rect x="2" y="3" width="12" height="11" fill="#fff9cc"/><rect x="0.5" y="0.5" width="15" height="15" fill="#d89850" stroke="#906030"/><path d="M2 14 V2 L14 14Z" fill="#c07838" stroke="#704010"/><path d="M4.5 12 V7 L9.5 12Z" fill="#fce8b0"/></svg>
<div class="s" style="left:1673px;top:687px">Алгебра</div>
<svg style="left:1641px;top:718px" width="10" height="10" viewBox="0 0 10 10"><rect x="0" y="0" width="10" height="10" fill="#fff"/><path d="M0.5 0 V10 M9.5 0 V10 M0 0.5 H10 M0 9.5 H10" stroke="#000" stroke-width="1" stroke-dasharray="1 1"/><rect x="3" y="4" width="5" height="1" fill="#000"/></svg>
<div class="hd" style="left:1650px;top:722px;width:3px"></div>
<svg style="left:1653px;top:714px" width="17" height="17" viewBox="0 0 17 17"><rect x="1" y="0" width="6" height="2" fill="#a0a0a0"/><rect x="0.5" y="1.5" width="15" height="14" rx="1" fill="#fff6c0" stroke="#8c8c8c"/><rect x="2" y="3" width="12" height="11" fill="#fff9cc"/><path d="M6 3 L2 8 L6 13 M10 3 L14 8 L10 13" fill="none" stroke="#111" stroke-width="2"/></svg>
<div class="s" style="left:1673px;top:711px">Сравнение</div>
<svg style="left:1641px;top:766px" width="10" height="10" viewBox="0 0 10 10"><rect x="0" y="0" width="10" height="10" fill="#fff"/><path d="M0.5 0 V10 M9.5 0 V10 M0 0.5 H10 M0 9.5 H10" stroke="#000" stroke-width="1" stroke-dasharray="1 1"/><rect x="3" y="4" width="5" height="1" fill="#000"/><rect x="5" y="2" width="1" height="5" fill="#000"/></svg>
<div class="hd" style="left:1650px;top:770px;width:3px"></div>
<svg style="left:1653px;top:762px" width="17" height="17" viewBox="0 0 17 17"><rect x="1" y="0" width="6" height="2" fill="#a0a0a0"/><rect x="0.5" y="1.5" width="15" height="14" rx="1" fill="#fff6c0" stroke="#8c8c8c"/><rect x="2" y="3" width="12" height="11" fill="#fff9cc"/><path d="M4 3 H12 V9 L9 12 V14 H7 V12 L4 9Z" fill="#d8d8d8" stroke="#707070"/><rect x="5" y="5" width="6" height="3" fill="#909090"/><path d="M5 1 V3 M8 1 V3 M11 1 V3" stroke="#d0a030" stroke-width="1.2"/></svg>
<div class="s" style="left:1673px;top:759px">UART</div>
<svg style="left:1641px;top:790px" width="10" height="10" viewBox="0 0 10 10"><rect x="0" y="0" width="10" height="10" fill="#fff"/><path d="M0.5 0 V10 M9.5 0 V10 M0 0.5 H10 M0 9.5 H10" stroke="#000" stroke-width="1" stroke-dasharray="1 1"/><rect x="3" y="4" width="5" height="1" fill="#000"/><rect x="5" y="2" width="1" height="5" fill="#000"/></svg>
<div class="hd" style="left:1650px;top:794px;width:3px"></div>
<svg style="left:1653px;top:786px" width="17" height="17" viewBox="0 0 17 17"><rect x="1" y="0" width="6" height="2" fill="#a0a0a0"/><rect x="0.5" y="1.5" width="15" height="14" rx="1" fill="#fff6c0" stroke="#8c8c8c"/><rect x="2" y="3" width="12" height="11" fill="#fff9cc"/><path d="M2 11 L7 11 L11 5 H15" fill="none" stroke="#000" stroke-width="2"/><path d="M13 3 L15 5 L13 7" fill="none" stroke="#000" stroke-width="1.5"/></svg>
<div class="s" style="left:1673px;top:783px">Переключатель</div>
<div class="hd" style="left:1662px;top:266px;width:7px"></div>
<svg style="left:1669px;top:258px" width="17" height="17" viewBox="0 0 17 17"><rect x="1" y="1" width="15" height="15" fill="#cfcbb0"/><rect x="0" y="0" width="15" height="15" fill="#fdf3b0"/><rect x="2" y="2" width="11" height="11" fill="#fff6c4"/><rect x="0" y="5" width="16" height="5" fill="#ffffff"/><text x="8" y="10" font-size="7" font-weight="bold" text-anchor="middle" fill="#223" font-family="Liberation Serif" textLength="14">или</text></svg>
<div class="s" style="left:1689px;top:255px">[OR]</div>
<div class="hd" style="left:1662px;top:290px;width:7px"></div>
<svg style="left:1669px;top:282px" width="17" height="17" viewBox="0 0 17 17"><rect x="1" y="1" width="15" height="15" fill="#cfcbb0"/><rect x="0" y="0" width="15" height="15" fill="#fdf3b0"/><rect x="2" y="2" width="11" height="11" fill="#fff6c4"/><text x="8" y="12.5" font-size="11" font-weight="bold" font-style="italic" text-anchor="middle" fill="#000" font-family="Liberation Sans">И</text></svg>
<div class="s" style="left:1689px;top:279px">[AND]</div>
<div class="hd" style="left:1662px;top:314px;width:7px"></div>
<svg style="left:1669px;top:306px" width="17" height="17" viewBox="0 0 17 17"><rect x="1" y="1" width="15" height="15" fill="#cfcbb0"/><rect x="0" y="0" width="15" height="15" fill="#fdf3b0"/><rect x="2" y="2" width="11" height="11" fill="#fff6c4"/><circle cx="8" cy="8" r="6.5" fill="#e4ecf4" stroke="#9aa"/><path d="M8 8 V3 A5 5 0 0 1 13 8Z" fill="#a0b8e8" stroke="#3050c0"/><path d="M8 8 L6 10" stroke="#000"/></svg>
<div class="s" style="left:1689px;top:303px">[Bounce]</div>
<div class="hd" style="left:1662px;top:338px;width:7px"></div>
<svg style="left:1669px;top:330px" width="17" height="17" viewBox="0 0 17 17"><rect x="1" y="1" width="15" height="15" fill="#cfcbb0"/><rect x="0" y="0" width="15" height="15" fill="#fdf3b0"/><rect x="2" y="2" width="11" height="11" fill="#fff6c4"/><rect x="0" y="5" width="16" height="5" fill="#ffffff"/><text x="8" y="10" font-size="7" font-weight="bold" text-anchor="middle" fill="#223" font-family="Liberation Serif" textLength="14">или</text><path d="M1 15 L15 1" stroke="#000" stroke-width="1"/></svg>
<div class="s" style="left:1689px;top:327px">[XOR]</div>
<div class="hd" style="left:1662px;top:362px;width:7px"></div>
<svg style="left:1669px;top:354px" width="17" height="17" viewBox="0 0 17 17"><rect x="1" y="1" width="15" height="15" fill="#cfcbb0"/><rect x="0" y="0" width="15" height="15" fill="#fdf3b0"/><rect x="2" y="2" width="11" height="11" fill="#fff6c4"/><rect x="0.5" y="0.5" width="15" height="15" fill="#fcf4c0" stroke="#8c9c60"/><rect x="0.5" y="0.5" width="15" height="3" fill="#6c9c40"/><path d="M1 7 H15 M1 10 H15 M1 13 H15 M5 4 V15 M10 4 V15" stroke="#b8c890"/></svg>
<div class="s" style="left:1689px;top:351px">Таблица состояний</div>
<div class="hd" style="left:1662px;top:386px;width:7px"></div>
<svg style="left:1669px;top:378px" width="17" height="17" viewBox="0 0 17 17"><rect x="1" y="1" width="15" height="15" fill="#cfcbb0"/><rect x="0" y="0" width="15" height="15" fill="#fdf3b0"/><rect x="2" y="2" width="11" height="11" fill="#fff6c4"/><rect x="1" y="3" width="14" height="11" fill="#e8e8e0" stroke="#909088"/><circle cx="3" cy="3" r="1.5" fill="#fff" stroke="#888"/><circle cx="13" cy="14" r="1.5" fill="#fff" stroke="#888"/><text x="8" y="11" font-size="6" text-anchor="middle" fill="#555" font-family="Liberation Sans">0-9</text></svg>
<div class="s" style="left:1689px;top:375px">Детектор изменения числа</div>
<div class="hd" style="left:1662px;top:410px;width:7px"></div>
<svg style="left:1669px;top:402px" width="17" height="17" viewBox="0 0 17 17"><rect x="1" y="1" width="15" height="15" fill="#cfcbb0"/><rect x="0" y="0" width="15" height="15" fill="#fdf3b0"/><rect x="2" y="2" width="11" height="11" fill="#fff6c4"/><rect x="1" y="3" width="14" height="11" fill="#e8e8e0" stroke="#909088"/><circle cx="3" cy="3" r="1.5" fill="#fff" stroke="#888"/><circle cx="13" cy="14" r="1.5" fill="#fff" stroke="#888"/><text x="8" y="11" font-size="6" text-anchor="middle" fill="#555" font-family="Liberation Sans">А-Я</text></svg>
<div class="s" style="left:1689px;top:399px">Детектор изменения строк</div>
<div class="hd" style="left:1662px;top:434px;width:7px"></div>
<svg style="left:1670px;top:430px" width="15" height="9" viewBox="0 0 15 9"><defs><linearGradient id="pg2" x1="0" y1="0" x2="0" y2="1"><stop offset="0" stop-color="#e8e8e4"/><stop offset="1" stop-color="#909088"/></linearGradient></defs><rect x="2.5" y="0.5" width="10" height="8" fill="url(#pg2)" stroke="#000080" stroke-width="1.3"/><path d="M0 4.5 H2.5 M12.5 4.5 H15" stroke="#000080" stroke-width="1.3"/></svg>
<div class="s" style="left:1689px;top:423px">Детектор изменения бита</div>
<div class="hd" style="left:1662px;top:458px;width:7px"></div>
<svg style="left:1670px;top:454px" width="15" height="9" viewBox="0 0 15 9"><defs><linearGradient id="pg2" x1="0" y1="0" x2="0" y2="1"><stop offset="0" stop-color="#e8e8e4"/><stop offset="1" stop-color="#909088"/></linearGradient></defs><rect x="2.5" y="0.5" width="10" height="8" fill="url(#pg2)" stroke="#000080" stroke-width="1.3"/><path d="M0 4.5 H2.5 M12.5 4.5 H15" stroke="#000080" stroke-width="1.3"/></svg>
<div class="s" style="left:1689px;top:447px">Клемма</div>
<div class="hd" style="left:1662px;top:602px;width:7px"></div>
<svg style="left:1669px;top:594px" width="17" height="17" viewBox="0 0 17 17"><rect x="1" y="1" width="15" height="15" fill="#cfcbb0"/><rect x="0" y="0" width="15" height="15" fill="#fdf3b0"/><rect x="2" y="2" width="11" height="11" fill="#fff6c4"/><path d="M2 7.5 H13 M7.5 2 V13" stroke="#404048" stroke-width="2"/></svg>
<div class="s" style="left:1689px;top:591px">[SUM(+)]</div>
<div class="hd" style="left:1662px;top:626px;width:7px"></div>
<svg style="left:1669px;top:618px" width="17" height="17" viewBox="0 0 17 17"><rect x="1" y="1" width="15" height="15" fill="#cfcbb0"/><rect x="0" y="0" width="15" height="15" fill="#fdf3b0"/><rect x="2" y="2" width="11" height="11" fill="#fff6c4"/><path d="M3.5 3.5 L11.5 11.5 M11.5 3.5 L3.5 11.5" stroke="#404048" stroke-width="2"/></svg>
<div class="s" style="left:1689px;top:615px">[MUL(*)]</div>
<div class="hd" style="left:1662px;top:650px;width:7px"></div>
<svg style="left:1669px;top:642px" width="17" height="17" viewBox="0 0 17 17"><rect x="1" y="1" width="15" height="15" fill="#cfcbb0"/><rect x="0" y="0" width="15" height="15" fill="#fdf3b0"/><rect x="2" y="2" width="11" height="11" fill="#fff6c4"/><path d="M2 7.5 H13" stroke="#404048" stroke-width="2"/></svg>
<div class="s" style="left:1689px;top:639px">[SUB(-)]</div>
<div class="hd" style="left:1662px;top:674px;width:7px"></div>
<svg style="left:1669px;top:666px" width="17" height="17" viewBox="0 0 17 17"><rect x="1" y="1" width="15" height="15" fill="#cfcbb0"/><rect x="0" y="0" width="15" height="15" fill="#fdf3b0"/><rect x="2" y="2" width="11" height="11" fill="#fff6c4"/><path d="M3 12 L12 3" stroke="#404048" stroke-width="2"/></svg>
<div class="s" style="left:1689px;top:663px">[DIV(/)]</div>
<div class="hd" style="left:1662px;top:746px;width:7px"></div>
<svg style="left:1669px;top:738px" width="17" height="17" viewBox="0 0 17 17"><rect x="1" y="1" width="15" height="15" fill="#cfcbb0"/><rect x="0" y="0" width="15" height="15" fill="#fdf3b0"/><rect x="2" y="2" width="11" height="11" fill="#fff6c4"/><path d="M4 2 L13 8 L4 14Z" fill="#f88a10" stroke="#804000" stroke-width="0.8"/><path d="M1 5 H4 M1 11 H4" stroke="#333" stroke-width="1.2"/><circle cx="14" cy="8" r="1.2" fill="#333"/></svg>
<div class="s" style="left:1689px;top:735px">[Comparator]</div>
<div class="a" style="left:1878px;top:178px;width:2px;height:619px;background:#fff"></div>
<div class="a" style="left:70px;top:262px;width:430px;height:24px;border:5px solid #b97a57"></div>
<div class="a" style="left:72px;top:287px;width:559px;height:25px;border:5px solid #a349a4"></div>
<div class="a" style="left:67px;top:404px;width:254px;height:27px;border:5px solid #00a2e8"></div>
<div class="a" style="left:1654px;top:253px;width:83px;height:30px;border:5px solid #fff200"></div>
<div class="a" style="left:1652px;top:589px;width:117px;height:29px;border:5px solid #ed1c24"></div>
<div class="a" style="left:1655px;top:734px;width:136px;height:28px;border:5px solid #22b14c"></div>
<svg style="left:0;top:0" width="1901" height="797" viewBox="0 0 1901 797"><line x1="500" y1="268" x2="787" y2="378" stroke="#b97a57" stroke-width="1" shape-rendering="crispEdges"/><line x1="502" y1="313" x2="782" y2="452" stroke="#00a2e8" stroke-width="1" shape-rendering="crispEdges"/><line x1="321" y1="418.5" x2="1223.6" y2="437.6" stroke="#00a2e8" stroke-width="1" shape-rendering="crispEdges"/><line x1="895" y1="417" x2="1652" y2="592.6" stroke="#ed1c24" stroke-width="1" shape-rendering="crispEdges"/><line x1="1039.3" y1="419.3" x2="1655" y2="738.9" stroke="#22b14c" stroke-width="1" shape-rendering="crispEdges"/><line x1="1164.2" y1="407.6" x2="1654" y2="258" stroke="#fff200" stroke-width="1" shape-rendering="crispEdges"/></svg>
</body></html>
